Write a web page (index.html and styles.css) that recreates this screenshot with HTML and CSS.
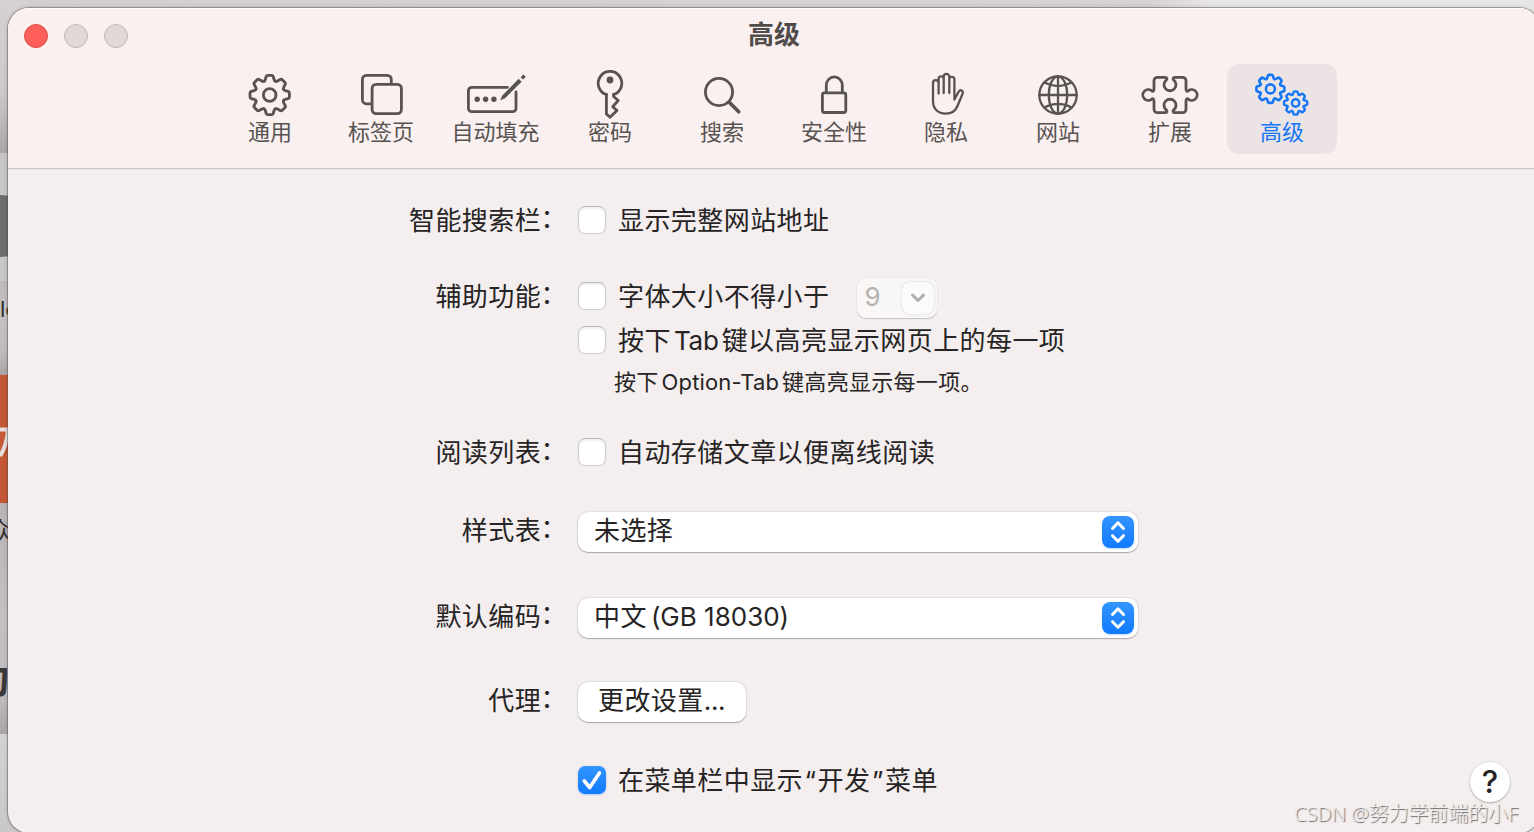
FILE: index.html
```html
<!DOCTYPE html>
<html lang="zh-CN">
<head>
<meta charset="utf-8">
<title>高级</title>
<link rel="stylesheet" href="styles.css">
</head>
<body>
<svg class="defs" width="0" height="0">
  <defs>
    <path id="tooth" d="M-5.6-13.5Q-4.7-13.9-4.3-15.2L-3.5-18Q-3.1-19.3-1.9-19.3H1.9Q3.1-19.3 3.5-18L4.3-15.2Q4.7-13.9 5.6-13.5"/>
    <g id="gear">
      <use href="#tooth"/><use href="#tooth" transform="rotate(45)"/><use href="#tooth" transform="rotate(90)"/><use href="#tooth" transform="rotate(135)"/><use href="#tooth" transform="rotate(180)"/><use href="#tooth" transform="rotate(225)"/><use href="#tooth" transform="rotate(270)"/><use href="#tooth" transform="rotate(315)"/>
      <circle r="6.2"/>
    </g>
  </defs>
</svg>
<div class="desktop">
  <div class="tile tile-top"></div>
  <div class="tile tile-icon"><span class="disc"></span></div>
  <div class="tile tile-name"><span class="peek peek-le">le</span></div>
  <div class="tile tile-orange"><svg width="8" height="128"><path d="M0 54.5H8M8 56Q6 72 0 81" fill="none" stroke="#e5dfdc" stroke-width="4"/></svg></div>
  <div class="tile tile-list"><span class="peek peek-zhong">众</span><span class="peek peek-dong">动</span></div>
  <div class="tile tile-bottom"></div>
</div>
<main class="window">
  <header class="header">
    <div class="titlebar">
      <div class="lights"><i class="light close"></i><i class="light"></i><i class="light"></i></div>
      <h1 class="title">高级</h1>
    </div>
    <nav class="toolbar">
      <div class="tool first"><svg class="icon" viewBox="0 0 60 50"><use href="#gear" transform="translate(29.7 25) scale(1.02)"/></svg><span>通用</span></div>
      <div class="tool"><svg class="icon" viewBox="0 0 60 50"><path d="M40.3 13V9.4a4 4 0 0 0-4-4H15.4a4 4 0 0 0-4 4V29.8a4 4 0 0 0 4 4H20"/><rect x="21.1" y="14.4" width="29.3" height="29.2" rx="4"/></svg><span>标签页</span></div>
      <div class="tool wide"><svg class="icon" viewBox="0.6 0 60 50"><path d="M42 17.3H6.5a3.5 3.5 0 0 0-3.5 3.5V38.2a3.5 3.5 0 0 0 3.5 3.5H47.1a3.5 3.5 0 0 0 3.5-3.5V22"/><g class="solid"><circle cx="11.8" cy="29.3" r="2.7"/><circle cx="20.2" cy="29.3" r="2.7"/><circle cx="28.5" cy="29.3" r="2.7"/><path d="M34.8 30.3L36.9 25.5 53.3 8.8 56.2 11.7 39.6 28.2Z"/><path d="M55.2 7.2L57.4 5.1Q58.6 4.5 59.3 5.4 60.3 6.5 59.7 7.5L57.8 9.6Z"/></g></svg><span>自动填充</span></div>
      <div class="tool"><svg class="icon" viewBox="0 0 60 50"><path d="M26.4 24.5V43.9L30 47.2 37 40.5 32.7 36.7 38.2 30.5 33.6 26.5V24.5"/><path d="M26.4 24.5A11.8 11.8 0 1 1 33.6 24.5"/><circle class="solid" cx="30" cy="10" r="3.4"/></svg><span>密码</span></div>
      <div class="tool"><svg class="icon" viewBox="0 0 60 50"><circle cx="27" cy="22" r="13.6"/><path d="M37.2 32.2L46.7 41.7" stroke-width="3.7"/></svg><span>搜索</span></div>
      <div class="tool"><svg class="icon" viewBox="0 0 60 50"><rect x="18.4" y="22.9" width="23.4" height="19.6" rx="2"/><path d="M22.3 22.5V15.5a8 8.6 0 0 1 16 0V22.5"/></svg><span>安全性</span></div>
      <div class="tool"><svg class="icon" viewBox="0 0 60 50"><path stroke-width="2.3" d="M22.6 23.5V13a2.8 2.8 0 0 0-5.6 0V31C17 39 22 43.6 29.6 43.6 35.6 43.6 39.5 41 41.5 36L46.6 23.6C47.5 20.4 44.4 19 42.8 21.5L38.4 29.5V9a2.6 2.6 0 0 0-5.1 0V23V6.7a2.8 2.8 0 0 0-5.6 0V23V9a2.55 2.55 0 0 0-5.1 0V13"/></svg><span>隐私</span></div>
      <div class="tool"><svg class="icon" viewBox="0 0 60 50"><g stroke-width="2.3"><circle cx="30" cy="25" r="18.7"/><ellipse cx="30" cy="25" rx="9.2" ry="18.7"/><path d="M30 6.3V43.7M11.3 25H48.7M16.4 12.6Q30 19.8 43.6 12.6M16.4 37.4Q30 30.2 43.6 37.4"/></g></svg><span>网站</span></div>
      <div class="tool"><svg class="icon" viewBox="0 0 60 50"><path d="M17.5 7.3H24.8C27.3 7.3 27.4 9 26.2 10.1A6 6 0 1 0 33.8 10.1C32.6 9 32.7 7.3 35.2 7.3H42.5A3.5 3.5 0 0 1 46 10.8V19C46 21.5 47.5 21.6 48.5 20.7A5.4 5.4 0 1 1 48.5 29.3C47.5 28.4 46 28.5 46 31V39.2A3.5 3.5 0 0 1 42.5 42.7H35.2C32.7 42.7 32.6 41 33.8 39.9A6 6 0 1 0 26.2 39.9C27.4 41 27.3 42.7 24.8 42.7H17.5A3.5 3.5 0 0 1 14 39.2V31C14 28.5 12.5 28.4 11.5 29.3A5.4 5.4 0 1 1 11.5 20.7C12.5 21.6 14 21.5 14 19V10.8A3.5 3.5 0 0 1 17.5 7.3Z"/></svg><span>扩展</span></div>
      <div class="tool active"><svg class="icon" viewBox="0 0 60 50"><use href="#gear" stroke-width="3.6" transform="translate(18.4 18.9) scale(.725)"/><use href="#gear" stroke-width="4" transform="translate(43.6 33) scale(.6)"/></svg><span>高级</span></div>
    </nav>
  </header>
  <section class="form">
    <div class="row"><div class="label">智能搜索栏<b class="colon">：</b></div><i class="check"></i><span class="text">显示完整网站地址</span></div>
    <div class="row gap-48"><div class="label">辅助功能<b class="colon">：</b></div><i class="check"></i><span class="text">字体大小不得小于</span>
      <div class="combo"><span>9</span><i class="combo-btn"><svg width="16" height="10"><path d="M2.5 2.2L8 7.5 13.5 2.2" fill="none" stroke="#b1afae" stroke-width="3" stroke-linecap="round" stroke-linejoin="round"/></svg></i></div></div>
    <div class="row gap-16"><div class="label"></div><i class="check"></i><span class="text">按下<b class="latin tab">Tab</b>键以高亮显示网页上的每一项</span></div>
    <div class="row gap-14"><div class="label"></div><span class="hint">按下<b class="latin option">Option-Tab</b>键高亮显示每一项。</span></div>
    <div class="row gap-42"><div class="label">阅读列表<b class="colon">：</b></div><i class="check"></i><span class="text">自动存储文章以便离线阅读</span></div>
    <div class="row tall gap-46"><div class="label">样式表<b class="colon">：</b></div><div class="select"><span>未选择</span><i class="stepper"><svg width="32" height="32"><path d="M10.5 12.5L16 6.8 21.5 12.5M10.5 19.7L16 25.3 21.5 19.7"/></svg></i></div></div>
    <div class="row tall gap-46"><div class="label">默认编码<b class="colon">：</b></div><div class="select"><span>中文<b class="latin">(GB 18030)</b></span><i class="stepper"><svg width="32" height="32"><path d="M10.5 12.5L16 6.8 21.5 12.5M10.5 19.7L16 25.3 21.5 19.7"/></svg></i></div></div>
    <div class="row tall gap-44"><div class="label">代理<b class="colon">：</b></div><div class="button">更改设置<b class="latin">...</b></div></div>
    <div class="row gap-44"><div class="label"></div><i class="check on"><svg width="28" height="28"><path d="M6.3 15L11.7 21.5 21.5 7"/></svg></i><span class="text">在菜单栏中显示<b class="quote">“</b>开发<b class="quote">”</b>菜单</span></div>
  </section>
  <div class="help">?</div>
</main>
<div class="watermark">CSDN @努力学前端的小F</div>
</body>
</html>
```
FILE: styles.css
```css
* { box-sizing: border-box; }
body {
  margin: 0;
  width: 1534px;
  height: 832px;
  overflow: hidden;
  position: relative;
  background: #c9c5c6;
  font-family: Inter, "Noto Sans CJK SC", sans-serif;
  color: #262424;
}
.defs { position: absolute; }
i { font-style: normal; display: block; flex: none; }
b { font-weight: 400; }

/* Page showing behind the window */
.desktop { position: absolute; inset: 0; background: linear-gradient(90deg, #d3cfd0, #d5d2d1 75%, #e8e6e5 79%, #e8e6e5); }
.tile { width: 30px; overflow: hidden; position: relative; }
.tile-top { height: 153px; background: linear-gradient(#d6d2d3, #cdc9ca 60%, #aaa6a7); }
.tile-icon { height: 128px; background: #c9c6c8; }
.disc { display: block; width: 62px; height: 62px; margin: 42px 0 0 -31px; border-radius: 50%; background: #6d6d6d; }
.tile-name { height: 94px; background: linear-gradient(#bcb8b9, #c8c4c5 30%, #c0bcbd 75%, #aaa6a7); }
.tile-orange { height: 128px; background: #c45734; }
.tile-orange svg { display: block; }
.tile-list { height: 231px; background: linear-gradient(#b8b3b5, #c5c0c2 50%, #bfbabc 85%, #aaa5a7); }
.tile-bottom { height: 98px; background: linear-gradient(#d4d3d3, #c9c7c7); }
.peek { position: absolute; line-height: 30px; white-space: nowrap; color: #2d2b2b; }
.peek-le { left: 0; top: 13px; font-size: 22px; }
.peek-zhong { left: -12px; top: 13px; font-size: 24px; }
.peek-dong { left: -31px; top: 161px; font-size: 40px; font-weight: 700; color: #3a3838; }

.window {
  position: absolute;
  left: 8px;
  top: 8px;
  width: 1532px;
  height: 825px;
  border-radius: 21px;
  overflow: hidden;
  background: #f4eeee;
  box-shadow: 0 0 0 1px rgba(90, 84, 86, .45), 0 0 4px rgba(0, 0, 0, .22);
}
.header {
  height: 161px;
  background: #faf0f0;
  border-bottom: 1px solid #cdc7c7;
  box-shadow: inset 0 1px 0 #fff, 0 1px 0 #e8e2e2;
}
.titlebar { height: 56px; display: grid; grid-template-columns: 1fr auto 1fr; align-items: center; }
.lights { display: flex; gap: 16px; padding-left: 16px; }
.light { width: 24px; height: 24px; border-radius: 50%; background: #e0d7d7; border: 1px solid #bfb7b7; }
.light.close { background: #fe5f5b; border-color: #e24842; }
.title { grid-column: 2; margin: 0; font-size: 26px; line-height: 52px; padding-bottom: 2px; font-weight: 700; color: #4f4c4b; }
.toolbar { display: flex; gap: 2px; padding-left: 206px; }
.tool {
  width: 110px;
  height: 90px;
  padding-top: 6px;
  border-radius: 12px;
  display: flex;
  flex-direction: column;
  align-items: center;
  font-size: 22px;
  line-height: 24px;
  color: #575351;
}
.tool.first { padding-left: 2px; }
.tool.wide { width: 115px; }
.tool.active { background: #ece3e4; color: #1677f6; }
.icon {
  width: 60px;
  height: 50px;
  overflow: visible;
  fill: none;
  stroke: currentColor;
  stroke-width: 2.8;
  stroke-linecap: round;
  stroke-linejoin: round;
}
.solid { fill: currentColor; stroke: none; }

.form { padding-top: 37px; font-size: 26px; letter-spacing: .43px; }
.row { display: flex; align-items: center; height: 28px; white-space: nowrap; line-height: 28px; }
.row.tall { height: 40px; }
.gap-14 { margin-top: 14px; }
.gap-16 { margin-top: 16px; }
.gap-42 { margin-top: 42px; }
.gap-44 { margin-top: 44px; }
.gap-46 { margin-top: 46px; }
.gap-48 { margin-top: 48px; }
.label { width: 560px; height: 30px; padding-top: 2px; margin-right: 10px; text-align: right; flex: none; }
.row.tall .label { height: 28px; padding-top: 0; margin-top: -3px; }
.colon { display: inline-block; width: 26.9px; text-align: left; text-indent: -.5px; line-height: 24px; vertical-align: 2px; }
.check {
  width: 28px;
  height: 28px;
  border-radius: 7px;
  background: #fff;
  border: 1px solid #d0cbcb;
  border-top-color: #bbb6b6;
  box-shadow: inset 0 2px 2px rgba(0, 0, 0, .07);
}
.check.on { border: 0; background: linear-gradient(#3395ff, #117aff); box-shadow: 0 1px 2px rgba(20, 110, 255, .3); }
.check svg { display: block; fill: none; stroke: #fff; stroke-width: 3.6; stroke-linecap: round; stroke-linejoin: round; }
.text { margin-left: 12px; padding-top: 2px; }
.latin { margin: 0 4px; letter-spacing: 0; }
.latin.tab { margin: 0 3px; letter-spacing: -.2px; }
.latin.option { margin: 0 3px; letter-spacing: .15px; }
.hint { margin-left: 36px; font-size: 22px; letter-spacing: .3px; }
.quote { letter-spacing: 0; display: inline-block; width: 14.6px; text-align: center; }
.combo {
  width: 80px;
  height: 40px;
  margin: -2px 0 -6px 28px;
  padding: 0 3px 2px 7px;
  display: flex;
  align-items: center;
  justify-content: space-between;
  border-radius: 9px;
  background: #f9f7f6;
  color: #b5b2b1;
  box-shadow: 0 1px 1px rgba(0, 0, 0, .18), 0 0 2px rgba(0, 0, 0, .06);
}
.combo-btn {
  width: 32px;
  height: 32px;
  margin-top: 2px;
  border-radius: 8px;
  background: #fcfbfb;
  display: grid;
  place-items: center;
  box-shadow: 0 0 2px rgba(0, 0, 0, .2);
}
.select, .button {
  height: 40px;
  border-radius: 10px;
  background: #fff;
  box-shadow: 0 1px 1px rgba(0, 0, 0, .24), 0 0 2px rgba(0, 0, 0, .22);
}
.select { width: 560px; padding: 0 4px 0 16px; display: flex; align-items: center; justify-content: space-between; }
.select span { padding-bottom: 2px; }
.stepper { width: 32px; height: 32px; border-radius: 8px; background: linear-gradient(#3395ff, #117aff); box-shadow: 0 1px 2px rgba(20, 110, 255, .25); }
.stepper svg { display: block; fill: none; stroke: #fff; stroke-width: 3; stroke-linecap: round; stroke-linejoin: round; }
.button { width: 168px; padding-left: 20px; line-height: 38px; }
.button .latin { margin: 0; letter-spacing: -.3px; }

.help {
  position: absolute;
  left: 1462px;
  top: 754px;
  width: 40px;
  height: 40px;
  border-radius: 50%;
  background: #fff;
  font-size: 31px;
  font-weight: 500;
  line-height: 40px;
  text-align: center;
  box-shadow: 0 1px 2px rgba(0, 0, 0, .25), 0 0 2px rgba(0, 0, 0, .15);
}
.watermark {
  position: absolute;
  right: 16px;
  top: 800px;
  font: 20px/28px "Noto Sans", "Noto Sans CJK SC", sans-serif;
  font-weight: 300;
  letter-spacing: -.1px;
  white-space: nowrap;
  color: #f0ecec;
  text-shadow: 1px 1px 1px #666;
}
```
